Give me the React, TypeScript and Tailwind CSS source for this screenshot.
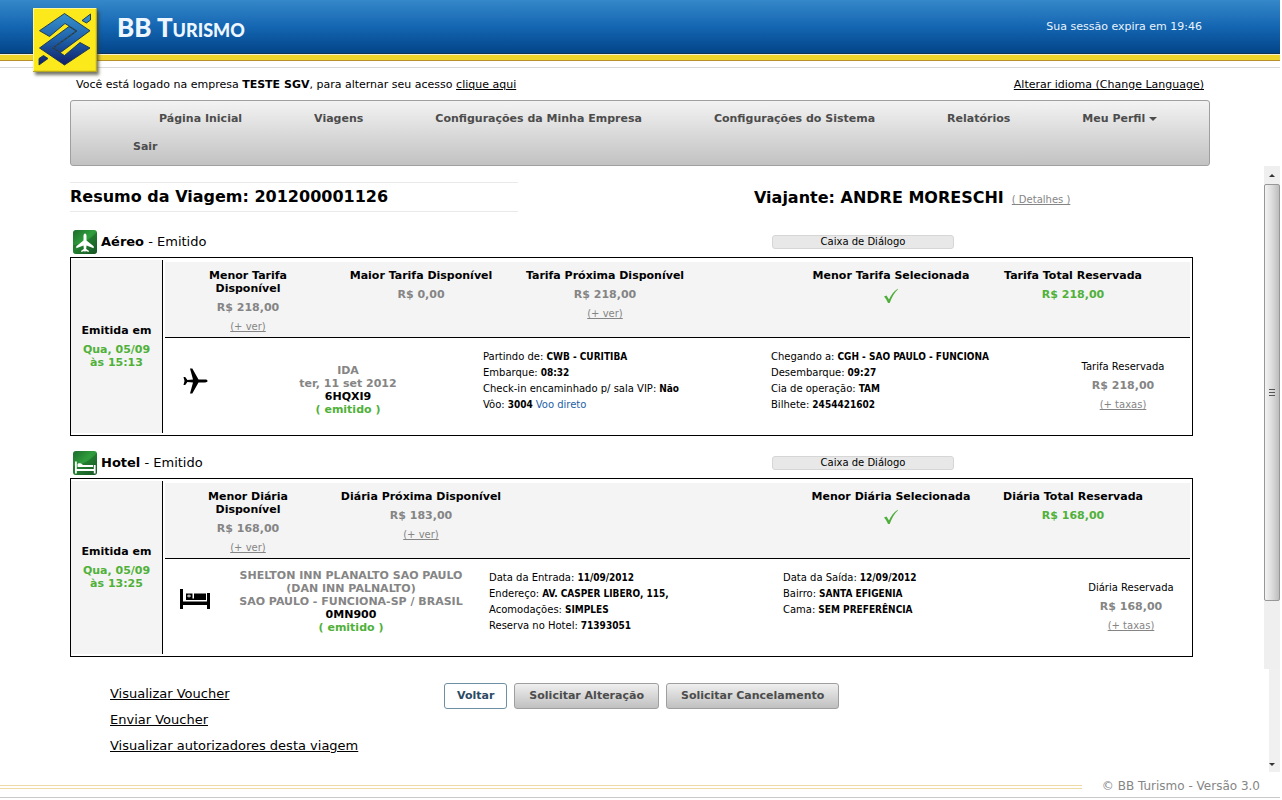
import type { ReactNode } from 'react';

type Fact = { label: string; value: string; note?: string };
type Quote = { title: string; price?: string; link?: boolean; check?: boolean; total?: boolean };

function BankLogo() {
  return (
    <svg viewBox="0 0 64 64" className="h-16 w-16 shadow-[2px_3px_3px_rgba(60,60,40,0.7)]" aria-hidden="true">
      <defs>
        <linearGradient id="ribbon" gradientUnits="userSpaceOnUse" x1="0" y1="4" x2="0" y2="58">
          <stop offset="0" stopColor="#3a96cf" />
          <stop offset="0.5" stopColor="#1f62ab" />
          <stop offset="1" stopColor="#101d66" />
        </linearGradient>
      </defs>
      <rect width="64" height="64" fill="#fbe91c" />
      <path d="M0 63.500H63.500V0" fill="none" stroke="#b9a81c" strokeWidth="1.500" />
      <path d="M0.500 63V0.500H63" fill="none" stroke="#fff59a" strokeWidth="1" />
      <g fill="url(#ribbon)" stroke="#17324f" strokeWidth="0.900" strokeLinejoin="round">
        <path d="M6.500 22.700 31.500 5.500 57 22.700 27.500 44.500 20.500 40 44 23 32 15.500 16.500 28.500Z" />
        <path d="M57 40 31.500 57 6.500 40 36 18.500 43 23 19.500 40 31.500 47.500 47 34.500Z" />
        <path d="M49 12.500 57.500 6 57.500 12 53.500 15Z" />
        <path d="M15 50.500 6 57 6 50.500 10.500 47.500Z" />
      </g>
    </svg>
  );
}

function BadgeFrame({ children }: { children: ReactNode }) {
  return (
    <svg viewBox="0 0 24 24" className="h-6 w-6" aria-hidden="true">
      <defs>
        <linearGradient id="badge" x1="0" y1="0" x2="1" y2="1">
          <stop offset="0" stopColor="#1d6b2c" />
          <stop offset="0.450" stopColor="#2f9e3c" />
          <stop offset="1" stopColor="#1c5a29" />
        </linearGradient>
      </defs>
      <rect width="24" height="24" rx="3" fill="url(#badge)" />
      <path d="M0 15C9 14 18 9 24 2V21a3 3 0 0 1-3 3H3a3 3 0 0 1-3-3Z" fill="#0e4a1e" opacity="0.350" />
      {children}
    </svg>
  );
}

function PlaneBadge() {
  return (
    <BadgeFrame>
      <path
        d="M12 3.500c1 0 1.500 1.300 1.500 2.600v4.400l7.200 5.700v2l-7.200-2.700-.3 3.500 2.600 1.800v1.200L12.600 21 12 22.500 11.400 21l-3.200 1v-1.200l2.600-1.800-.3-3.500-7.200 2.700v-2l7.200-5.700V6.100C10.500 4.800 11 3.500 12 3.500Z"
        fill="#fff"
      />
    </BadgeFrame>
  );
}

function BedBadge() {
  return (
    <BadgeFrame>
      <path d="M2 10.500h1.800V18h17v-4h1.800v8.500h-1.800V20h-17v2.500H2Z" fill="#fff" />
      <path d="M4.500 13.500c0-1.500 3.500-1.800 4.500-.2l1 .7h10v2h-15.500Z" fill="#fff" />
    </BadgeFrame>
  );
}

function Plane() {
  return (
    <svg viewBox="0 0 26 26" className="h-[26px] w-[26px]" aria-hidden="true">
      <path
        d="M25.500 13c0 1-1.200 1.400-2.400 1.400h-6.600L10.300 25.500H8l3-11.100-5.600-.3-2.200 3H1.500L2.500 13l-1-4.100h1.700l2.200 3 5.600-.3L8 .5h2.300l6.200 11.100h6.600c1.200 0 2.400.4 2.400 1.400Z"
        fill="#000"
      />
    </svg>
  );
}

function Bed() {
  return (
    <svg viewBox="0 0 30 20" className="h-5 w-[30px]" aria-hidden="true">
      <path d="M0 0h3v12.500h24V4h3v16h-3v-4H3V20H0Z" fill="#000" />
      <path d="M6 4.500h6.500V11H6ZM14 4.500h12V11H14Z" fill="#000" />
      <path d="M7 7h4M9 5.500v3" stroke="#fff" strokeWidth="0.900" />
      <path d="M12 9.500h3V11h-3Z" fill="#000" />
    </svg>
  );
}

function Check() {
  return (
    <svg viewBox="0 0 16 16" className="h-4 w-4" aria-hidden="true">
      <path d="M1 8.500 3.500 7.500 6 11.500C8 7 11 3.300 14.800.8L15 1.300C11.500 4.800 8.700 9.500 6.700 15H5C4 12.500 2.700 10.300 1 8.500Z" fill="#4fae3c" />
    </svg>
  );
}

function MoreLink({ children }: { children: ReactNode }) {
  return (
    <a href="#" className="text-[10px] leading-[13px] text-[#858585] underline">
      {children}
    </a>
  );
}

function QuoteCell({ quote }: { quote: Quote }) {
  return (
    <div className="flex flex-col items-center gap-1.5 px-1 text-center text-[11px] font-bold leading-[13px]">
      <h3>{quote.title}</h3>
      {quote.price && <p className={quote.total ? 'text-[#50b13a]' : 'text-[#858585]'}>{quote.price}</p>}
      {quote.check && <Check />}
      {quote.link && (
        <span className="flex font-normal">
          <MoreLink>(+ ver)</MoreLink>
        </span>
      )}
    </div>
  );
}

function Facts({ items }: { items: Fact[] }) {
  return (
    <dl className="min-h-16 pb-2.5 text-[10px] leading-4">
      {items.map((f) => (
        <div key={f.label} className="flex gap-[3px] whitespace-nowrap">
          <dt>{f.label}</dt>
          <dd className="font-['DejaVu_Sans_Condensed','DejaVu_Sans',sans-serif] font-bold">{f.value}</dd>
          {f.note && <dd className="text-[#1d5fa8]">{f.note}</dd>}
        </div>
      ))}
    </dl>
  );
}

function Booking(props: {
  badge: ReactNode;
  name: string;
  issued: string[];
  quotes: Quote[];
  reserved: Quote[];
  children: ReactNode;
}) {
  return (
    <section>
      <div className="grid grid-cols-[702px_182px] items-center pb-[3px]">
        <h2 className="flex items-center gap-1 pl-[3px] text-[13px] font-normal leading-4">
          {props.badge}
          <span>
            <b>{props.name}</b> - Emitido
          </span>
        </h2>
        <button
          type="button"
          className="h-3.5 rounded-[3px] border border-[#d6d6d6] bg-[#e8e8e8] text-[10px] leading-3"
        >
          Caixa de Diálogo
        </button>
      </div>
      <div className="flex gap-0.5 border border-black p-0.5 pl-0">
        <div className="flex w-[92px] flex-col items-center justify-center gap-1.5 border-r border-black bg-[#f4f4f4] text-center text-[11px] font-bold leading-[13px]">
          <p>Emitida em</p>
          <p className="text-[#50b13a]">
            {props.issued[0]}
            <br />
            {props.issued[1]}
          </p>
        </div>
        <div className="flex-1">
          <div className="mt-0.5 flex justify-between border-b border-black bg-[#f4f4f4] pt-[7px] pr-[26px] pb-1">
            <div className="grid grid-cols-[118px_24px_180px_188px] pl-6">
              {props.quotes.map((q, i) => (
                <div key={q.title} className={i === 1 ? 'col-start-3' : undefined}>
                  <QuoteCell quote={q} />
                </div>
              ))}
            </div>
            <div className="grid grid-cols-[182px_182px]">
              {props.reserved.map((q) => (
                <QuoteCell key={q.title} quote={q} />
              ))}
            </div>
          </div>
          {props.children}
        </div>
      </div>
    </section>
  );
}

function Reserved({ label, price }: { label: string; price: string }) {
  return (
    <div className="flex flex-col items-center gap-1.5 leading-[13px]">
      <p className="text-[10px]">{label}</p>
      <p className="text-[11px] font-bold text-[#858585]">{price}</p>
      <MoreLink>(+ taxas)</MoreLink>
    </div>
  );
}

function Scrollbar() {
  return (
    <div className="flex w-4 flex-col items-end" aria-hidden="true">
      <div className="flex w-full flex-1 flex-col bg-[#efefef]">
        <div className="flex h-[18px] items-center justify-center">
          <span className="border-x-[3px] border-b-[3px] border-x-transparent border-b-[#333]" />
        </div>
        <div className="flex h-[417px] items-center justify-center rounded-[2px] border border-[#979797] bg-linear-to-r from-[#f3f3f3] via-[#dcdcdc] to-[#bdbdbd]">
          <div className="flex flex-col gap-0.5">
            <span className="h-px w-1.5 bg-[#555]" />
            <span className="h-px w-1.5 bg-[#555]" />
            <span className="h-px w-1.5 bg-[#555]" />
          </div>
        </div>
      </div>
      <div className="flex h-[103px] w-[11px] items-end bg-[#f0f0f0] pb-1.5">
        <span className="border-x-[3px] border-t-[3px] border-x-transparent border-t-[#333]" />
      </div>
    </div>
  );
}

const menu = ['Página Inicial', 'Viagens', 'Configurações da Minha Empresa', 'Configurações do Sistema', 'Relatórios'];

export default function App() {
  return (
    <div className="flex min-h-screen flex-col bg-white pr-0.5 font-['DejaVu_Sans',Verdana,sans-serif] text-black">
      <header className="border-b border-[#d9d9d9] pb-1.5">
        <div className="flex h-[54px] items-start justify-between border-b border-[#12304f] bg-linear-to-b from-[#3588c9] via-[#1466b2] to-[#04458a] pr-[78px] pl-[33px]">
          <div className="flex items-start gap-5 pt-2">
            <span className="relative z-10 h-10">
              <BankLogo />
            </span>
            <h1 className="pt-0.5 font-['Lato',sans-serif] text-[26px] font-black leading-[34px] text-[#eef7ff] [font-variant-caps:small-caps]">
              BB Turismo
            </h1>
          </div>
          <p className="pt-5 text-[11px] leading-[14px] text-[#e9f3fb]">Sua sessão expira em 19:46</p>
        </div>
        <div className="h-[7px] border-t border-b border-t-[#f7f3d8] border-b-[#b8912a] bg-[#f0d42c]" />
      </header>

      <div className="flex items-center justify-between px-[76px] pt-2.5 pb-[9px] text-[11px] leading-[13px]">
        <p>
          Você está logado na empresa <b>TESTE SGV</b>, para alternar seu acesso{' '}
          <a href="#" className="underline">clique aqui</a>
        </p>
        <a href="#" className="underline">Alterar idioma (Change Language)</a>
      </div>

      <nav className="mx-[70px] rounded-[3px] border border-[#9f9f9f] bg-linear-to-b from-[#f3f3f3] to-[#c2c2c2] py-1">
        <ul className="flex flex-wrap pl-[26px] text-[11px] font-bold leading-7 text-[#4c4c4c]">
          {menu.map((item) => (
            <li key={item} className="px-9 first:ml-[26px]">
              <a href="#">{item}</a>
            </li>
          ))}
          <li className="px-9">
            <a href="#" className="flex items-center gap-1">
              Meu Perfil
              <span className="border-x-4 border-t-4 border-x-transparent border-t-[#4c4c4c]" />
            </a>
          </li>
          <li className="px-9">
            <a href="#">Sair</a>
          </li>
        </ul>
      </nav>

      <div className="flex flex-1">
        <main className="flex-1 pt-4 pr-[71px] pl-[70px]">
          <div className="grid grid-cols-[448px_1fr] gap-x-[236px]">
            <h2 className="border-y border-[#e9e9e9] text-base font-bold leading-7">Resumo da Viagem: 201200001126</h2>
            <div className="flex h-[30px] items-baseline gap-2">
              <h2 className="text-base font-bold leading-8">Viajante: ANDRE MORESCHI</h2>
              <MoreLink>( Detalhes )</MoreLink>
            </div>
          </div>

          <div className="mt-[18px] flex flex-col gap-[15px]">
            <Booking
              badge={<PlaneBadge />}
              name="Aéreo"
              issued={['Qua, 05/09', 'às 15:13']}
              quotes={[
                { title: 'Menor Tarifa Disponível', price: 'R$ 218,00', link: true },
                { title: 'Maior Tarifa Disponível', price: 'R$ 0,00' },
                { title: 'Tarifa Próxima Disponível', price: 'R$ 218,00', link: true },
              ]}
              reserved={[
                { title: 'Menor Tarifa Selecionada', check: true },
                { title: 'Tarifa Total Reservada', price: 'R$ 218,00', total: true },
              ]}
            >
              <div className="grid min-h-[95px] grid-cols-[60px_258px_288px_1fr_134px] items-center">
                <div className="flex justify-center pb-2.5"><Plane /></div>
                <div className="pt-2 pr-3 text-center text-[11px] font-bold leading-[13px] text-[#858585]">
                  <p>IDA</p>
                  <p>ter, 11 set 2012</p>
                  <p className="text-black">6HQXI9</p>
                  <p className="text-[#50b13a]">( emitido )</p>
                </div>
                <Facts
                  items={[
                    { label: 'Partindo de:', value: 'CWB - CURITIBA' },
                    { label: 'Embarque:', value: '08:32' },
                    { label: 'Check-in encaminhado p/ sala VIP:', value: 'Não' },
                    { label: 'Vôo:', value: '3004', note: 'Voo direto' },
                  ]}
                />
                <Facts
                  items={[
                    { label: 'Chegando a:', value: 'CGH - SAO PAULO - FUNCIONA' },
                    { label: 'Desembarque:', value: '09:27' },
                    { label: 'Cia de operação:', value: 'TAM' },
                    { label: 'Bilhete:', value: '2454421602' },
                  ]}
                />
                <Reserved label="Tarifa Reservada" price="R$ 218,00" />
              </div>
            </Booking>

            <Booking
              badge={<BedBadge />}
              name="Hotel"
              issued={['Qua, 05/09', 'às 13:25']}
              quotes={[
                { title: 'Menor Diária Disponível', price: 'R$ 168,00', link: true },
                { title: 'Diária Próxima Disponível', price: 'R$ 183,00', link: true },
              ]}
              reserved={[
                { title: 'Menor Diária Selecionada', check: true },
                { title: 'Diária Total Reservada', price: 'R$ 168,00', total: true },
              ]}
            >
              <div className="grid min-h-[95px] grid-cols-[60px_264px_294px_1fr_118px] items-center">
                <div className="flex justify-center pb-4"><Bed /></div>
                <div className="pr-3 pb-2.5 text-center text-[11px] font-bold leading-[13px] whitespace-nowrap text-[#858585]">
                  <p>SHELTON INN PLANALTO SAO PAULO</p>
                  <p>(DAN INN PALNALTO)</p>
                  <p>SAO PAULO - FUNCIONA-SP / BRASIL</p>
                  <p className="text-black">0MN900</p>
                  <p className="text-[#50b13a]">( emitido )</p>
                </div>
                <Facts
                  items={[
                    { label: 'Data da Entrada:', value: '11/09/2012' },
                    { label: 'Endereço:', value: 'AV. CASPER LIBERO, 115,' },
                    { label: 'Acomodações:', value: 'SIMPLES' },
                    { label: 'Reserva no Hotel:', value: '71393051' },
                  ]}
                />
                <div className="h-[74px]">
                  <Facts
                    items={[
                      { label: 'Data da Saída:', value: '12/09/2012' },
                      { label: 'Bairro:', value: 'SANTA EFIGENIA' },
                      { label: 'Cama:', value: 'SEM PREFERÊNCIA' },
                    ]}
                  />
                </div>
                <Reserved label="Diária Reservada" price="R$ 168,00" />
              </div>
            </Booking>
          </div>

          <div className="mt-6 grid grid-cols-[334px_1fr] pl-10">
            <ul className="text-[13px] leading-[26px]">
              <li><a href="#" className="underline">Visualizar Voucher</a></li>
              <li><a href="#" className="underline">Enviar Voucher</a></li>
              <li><a href="#" className="underline">Visualizar autorizadores desta viagem</a></li>
            </ul>
            <div className="flex items-start gap-[7px] pt-0.5 text-[11px] font-bold leading-4">
              <button type="button" className="h-[26px] rounded-[3px] border border-[#6f8fa3] bg-white px-3 text-[#2b4a63]">
                Voltar
              </button>
              {['Solicitar Alteração', 'Solicitar Cancelamento'].map((label) => (
                <button
                  key={label}
                  type="button"
                  className="h-[26px] rounded-[3px] border border-[#9f9f9f] bg-linear-to-b from-[#efefef] to-[#c0c0c0] px-3.5 text-[#4c4c4c]"
                >
                  {label}
                </button>
              ))}
            </div>
          </div>
        </main>
        <Scrollbar />
      </div>

      <footer className="mb-0.5 flex h-[26px] items-center justify-between gap-5 border-b border-[#c9c9c9] pr-5">
        <div className="mt-[5px] h-1 flex-1 border-y border-[#efd9a4]" />
        <p className="pt-0.5 text-[12px] leading-[14px] text-[#858585]">© BB Turismo - Versão 3.0</p>
      </footer>
    </div>
  );
}
